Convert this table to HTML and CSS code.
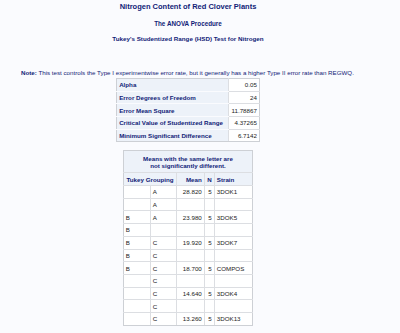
FILE: index.html
```html
<!DOCTYPE html>
<html>
<head>
<meta charset="utf-8">
<link rel="stylesheet" href="styles.css">
</head>
<body>
<div class="page">
  <div class="title">Nitrogen Content of Red Clover Plants</div>
  <div class="proc">The ANOVA Procedure</div>
  <div class="subtitle">Tukey's Studentized Range (HSD) Test for Nitrogen</div>
  <div class="note"><b>Note:</b> This test controls the Type I experimentwise error rate, but it generally has a higher Type II error rate than REGWQ.</div>
  <table class="t1">
    <colgroup><col class="c-lab"><col class="c-val"></colgroup>
    <tr><th>Alpha</th><td>0.05</td></tr>
    <tr><th>Error Degrees of Freedom</th><td>24</td></tr>
    <tr><th>Error Mean Square</th><td>11.78867</td></tr>
    <tr><th>Critical Value of Studentized Range</th><td>4.37265</td></tr>
    <tr><th>Minimum Significant Difference</th><td>6.7142</td></tr>
  </table>
  <table class="t2">
    <colgroup><col class="g1"><col class="g2"><col class="cm"><col class="cn"><col class="cs"></colgroup>
    <tr><th colspan="5" class="cap">Means with the same letter are<br>not significantly different.</th></tr>
    <tr class="hdr"><th colspan="2" class="ctr">Tukey Grouping</th><th class="r">Mean</th><th class="r">N</th><th class="l">Strain</th></tr>
    <tr><td></td><td>A</td><td class="r">28.820</td><td class="r">5</td><td>3DOK1</td></tr>
    <tr><td></td><td>A</td><td></td><td></td><td></td></tr>
    <tr><td>B</td><td>A</td><td class="r">23.980</td><td class="r">5</td><td>3DOK5</td></tr>
    <tr><td>B</td><td></td><td></td><td></td><td></td></tr>
    <tr><td>B</td><td>C</td><td class="r">19.920</td><td class="r">5</td><td>3DOK7</td></tr>
    <tr><td>B</td><td>C</td><td></td><td></td><td></td></tr>
    <tr><td>B</td><td>C</td><td class="r">18.700</td><td class="r">5</td><td>COMPOS</td></tr>
    <tr><td></td><td>C</td><td></td><td></td><td></td></tr>
    <tr><td></td><td>C</td><td class="r">14.640</td><td class="r">5</td><td>3DOK4</td></tr>
    <tr><td></td><td>C</td><td></td><td></td><td></td></tr>
    <tr><td></td><td>C</td><td class="r">13.260</td><td class="r">5</td><td>3DOK13</td></tr>
  </table>
</div>
</body>
</html>
```

FILE: styles.css
```css
html, body {
  margin: 0;
  padding: 0;
  background: #FAFBFE;
}
body {
  font-family: "Liberation Sans", Arial, sans-serif;
  color: #112277;
}
.page {
  width: 376px;
  display: flex;
  flex-direction: column;
  align-items: center;
  padding-top: 2.7px;
}
.title {
  font-size: 7.5px;
  font-weight: bold;
  line-height: 8px;
}
.proc {
  font-size: 6.3px;
  font-weight: bold;
  line-height: 8px;
  margin-top: 9.3px;
}
.subtitle {
  font-size: 6.25px;
  font-weight: bold;
  line-height: 8px;
  margin-top: 7px;
}
.note {
  align-self: flex-start;
  margin-left: 21px;
  font-size: 6.2px;
  line-height: 8px;
  margin-top: 25.7px;
}
.note b { font-weight: bold; }
table {
  border-collapse: collapse;
  table-layout: fixed;
  background: #fff;
  border: 1px solid #CDD0D5;
}
th, td {
  border: 1px solid #DCDEE2;
  font-size: 6.2px;
  line-height: 7px;
  padding: 0 2px;
  height: 12.7px;
  box-sizing: border-box;
  white-space: nowrap;
  overflow: hidden;
}
th {
  background: #EDF2F9;
  color: #112277;
  font-weight: bold;
  text-align: left;
}
td {
  color: #222;
  text-align: left;
}
.t1 th { border-bottom-color: #FAFBFE; border-left-color: #CDD0D5; }
.t1 td { text-align: right; border-right-color: #CDD0D5; }
.t1 tr:first-child th, .t1 tr:first-child td { border-top-color: #CDD0D5; }
.t1 tr:last-child th, .t1 tr:last-child td { border-bottom-color: #CDD0D5; }
.t1 {
  margin-top: 1.3px;
  width: 142.7px;
}
.c-lab { width: 112px; }
.c-val { width: 30.7px; }
.t2 {
  margin-top: 7.6px;
  width: 129.4px;
}
.t2 tr > :first-child { border-left-color: #CDD0D5; }
.t2 tr > :last-child { border-right-color: #CDD0D5; }
.t2 tr:first-child th { border-top-color: #CDD0D5; }
.t2 tr:last-child td { border-bottom-color: #CDD0D5; }
.g1 { width: 27px; }
.g2 { width: 26.4px; }
.cm { width: 27.6px; }
.cn { width: 10px; }
.cs { width: 38.4px; }
.cap {
  text-align: center;
  height: 22.4px;
  white-space: normal;
}
.ctr { text-align: center; }
.r { text-align: right; }
.l { text-align: left; }
```
